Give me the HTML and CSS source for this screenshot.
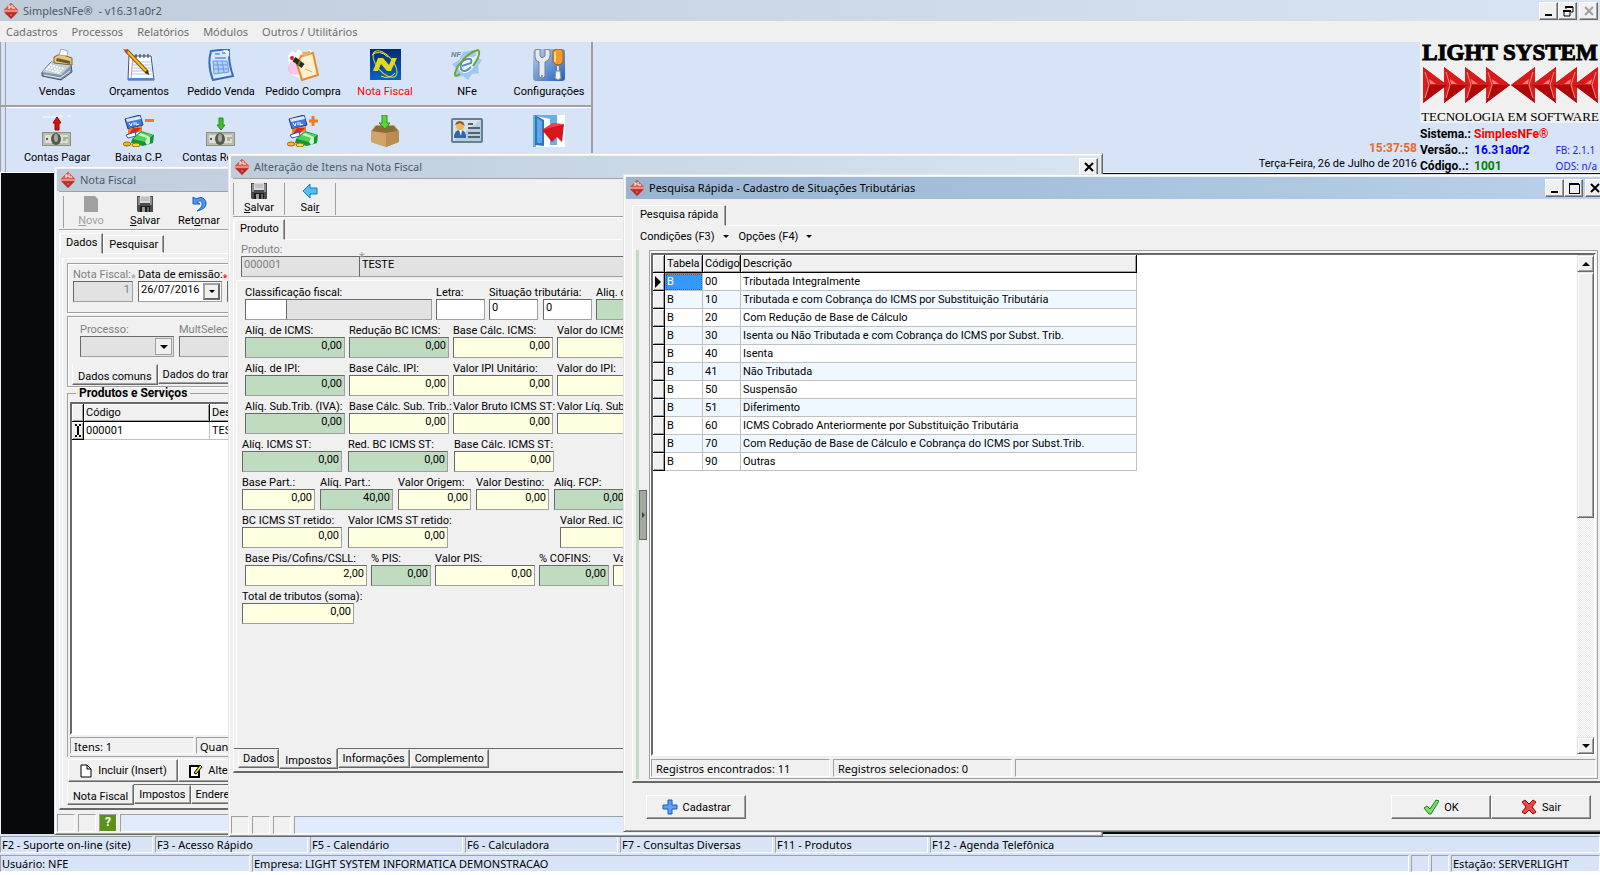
FILE: index.html
```html
<!DOCTYPE html>
<html lang="pt-BR">
<head>
    <meta charset="UTF-8">
    <meta name="viewport" content="width=device-width, initial-scale=1.0">
    <title>SimplesNFe® - v16.31a0r2</title>
    <link rel="stylesheet" href="styles.css">
</head>
<body>
    <!-- Shared icons -->
    <svg class="defs" width="0" height="0">
        <symbol id="brand" viewBox="0 0 16 16">
            <path d="M8 0 L16 8 L8 16 L0 8 Z" fill="#c9372c"/>
            <path d="M3 5 L8 0 L13 5 L15 7 H1 Z" fill="#d9604f"/>
            <path d="M0 8 H16" stroke="#fbe3df" stroke-width="1"/>
            <path d="M5 3 H7 V5 H5 M9 2 V5 H12 M7 12 H9" stroke="#fff" fill="none"/>
            <path d="M2 10 H14 L8 16 Z" fill="#a8251c" opacity=".5"/>
        </symbol>
        <symbol id="floppy" viewBox="0 0 16 16">
            <path d="M0 0 H16 V16 H1 L0 15 Z" fill="#4c4c4c"/>
            <path d="M1 1 H3 V9 H1 Z M13 1 H15 V9 H13 Z" fill="#8d8d8d"/>
            <rect x="3" y="0" width="10" height="7" fill="#d9d9d9"/>
            <path d="M4 2 H12 M4 4 H12" stroke="#aaa"/>
            <rect x="3" y="10" width="10" height="6" fill="#1c1c1c"/>
            <rect x="5" y="11" width="3" height="5" fill="#9a9a9a"/>
            <rect x="10" y="11" width="2" height="5" fill="#666"/>
        </symbol>
        <symbol id="bill" viewBox="0 0 32 32">
            <rect x="1" y="17" width="29" height="14" fill="#8b8f84"/>
            <rect x="2" y="18" width="27" height="12" fill="#b9bdb0"/>
            <rect x="4" y="20" width="23" height="8" fill="#dcdfd4"/>
            <ellipse cx="15" cy="24" rx="5" ry="6" fill="#54594e"/>
            <ellipse cx="15" cy="23" rx="2" ry="4" fill="#a8ac9e"/>
            <circle cx="6" cy="24" r="1" fill="#333"/>
            <path d="M22 23 H27 M22 25 H25" stroke="#777c70"/>
        </symbol>
        <symbol id="cash" viewBox="0 0 32 32">
            <path d="M2 4 L17 0 L20 10 L5 14 Z" fill="#3f7be0" stroke="#223a7c"/>
            <path d="M3 4 L17 1 L18 4 L4 7 Z" fill="#d8e8ff"/>
            <path d="M6 8 L8 11 L9 8 M11 7 V10 M13 7 V10 L16 9" stroke="#fff" fill="none"/>
            <path d="M5 14 L19 11 L19 16 L5 20 Z" fill="#ff7a1f"/>
            <path d="M5 20 L10 13 L18 13 L12 19 Z" fill="#e02a12"/>
            <path d="M3 20 L12 17 L13 21 L5 23 Z" fill="#fff" stroke="#2c5bb0"/>
            <path d="M9 24 L18 16 L31 20 L30 28 L20 31 L8 28 Z" fill="#159238"/>
            <path d="M10 24 L18 17 L30 20 L22 27 Z" fill="#4cd352"/>
            <path d="M15 20 L24 23 L22 27 L24 30 L27 28 L27 22 L18 18 Z" fill="#c9f7c6"/>
            <ellipse cx="4" cy="29" rx="4" ry="2" fill="#f3b618" stroke="#a66b00"/>
            <ellipse cx="13" cy="30" rx="4" ry="2" fill="#f8d44c" stroke="#a66b00"/>
        </symbol>
    </svg>

    <header class="titlebar main-title">
        <svg class="i16"><use href="#brand"/></svg>
        <h1>SimplesNFe® &nbsp;- v16.31a0r2</h1>
        <div class="win-buttons">
            <button aria-label="Minimizar"><svg width="12" height="12"><path d="M2 10 H9" stroke="#000" stroke-width="2"/></svg></button>
            <button aria-label="Restaurar"><svg width="12" height="12"><path d="M4 2 H11 V7 H9 M4 2 V4 M1 6 H8 V11 H2 V6" stroke="#000" fill="none"/><path d="M3 2 H11 M1 6 H9" stroke="#000" stroke-width="2"/></svg></button>
            <button class="close" aria-label="Fechar" disabled><svg width="12" height="12"><path d="M2 2 L10 10 M10 2 L2 10" stroke="#a0a0a0" stroke-width="2"/></svg></button>
        </div>
    </header>
    <nav class="menubar">
        <button>Cadastros</button>
        <button>Processos</button>
        <button>Relatórios</button>
        <button>Módulos</button>
        <button>Outros / Utilitários</button>
    </nav>

    <section class="top">
        <div class="toolbars">
            <div class="toolbar">
                <button>
                    <svg viewBox="0 0 32 32">
                        <path d="M1 23 L10 13 L30 16 L31 23 L20 31 L1 27 Z" fill="#8396aa" stroke="#45566c"/>
                        <path d="M1 23 L10 13 L30 16 L20 26 Z" fill="#c3d0dc"/>
                        <path d="M13 8 L19 5 L31 9 L31 16 L13 14 Z" fill="#e4c878" stroke="#85652a"/>
                        <path d="M16 9 L29 12 V15 L15 12 Z" fill="#6a5a31"/>
                        <path d="M18 6 L20 0 L27 2 L26 7 Z" fill="#fff" stroke="#9aa"/>
                        <path d="M7 18 L21 22 M9 16 L23 20 M5 20 L19 24" stroke="#fff" stroke-width="2" stroke-dasharray="2 1"/>
                        <path d="M3 26 L19 29 L29 22" stroke="#e4ebf2" fill="none"/>
                    </svg>
                    <span>Vendas</span>
                </button>
                <button>
                    <svg viewBox="0 0 32 32">
                        <path d="M6 7 H28 L31 31 H5 Z" fill="#fff" stroke="#3a5688"/>
                        <path d="M5 29 H30 V31 H5 Z" fill="#4788d8"/>
                        <path d="M10 13 H28 M9 16 H28 M9 19 H29 M9 22 H29 M8 25 H29" stroke="#a9c5ec"/>
                        <path d="M10 8 L8 29" stroke="#e09090"/>
                        <path d="M9 5 V9 M13 5 V9 M17 5 V9 M21 5 V9 M25 5 V9" stroke="#333"/>
                        <path d="M3 1 L24 23" stroke="#87590b" stroke-width="4"/>
                        <path d="M3 1 L23 22" stroke="#f9bc28" stroke-width="2"/>
                        <path d="M0 0 L5 1 L4 5 Z" fill="#c43c28"/>
                        <path d="M22 24 L26 26 L25 21 Z" fill="#3a2c1c"/>
                    </svg>
                    <span>Orçamentos</span>
                </button>
                <button>
                    <svg viewBox="0 0 32 32">
                        <path d="M6 2 L24 0 Q23 12 28 27 L8 31 Q2 16 6 2 Z" fill="#d9e8fe" stroke="#356cc5" stroke-width="2"/>
                        <path d="M10 5 H15 M17 4 H22 M10 9 H21" stroke="#7ba5e8" stroke-width="2"/>
                        <path d="M8 12 H22 L24 23 L9 25 Z" fill="#b5d0f8" stroke="#6c97df"/>
                        <path d="M12 12 L14 24 M17 12 L19 23 M8 16 H23 M8 20 H23" stroke="#6c97df"/>
                        <path d="M24 2 L18 1 L24 8 Z" fill="#fff"/>
                    </svg>
                    <span>Pedido Venda</span>
                </button>
                <button>
                    <svg viewBox="0 0 32 32">
                        <path d="M1 7 L5 2 L9 4 L11 0 L15 3 L24 1 L30 16 L20 31 L5 26 L2 18 Z" fill="#fff"/>
                        <circle cx="8" cy="19" r="7" fill="#f5aee8" opacity=".7"/>
                        <path d="M14 7 L26 4 L31 26 L15 31 L10 15 Z" fill="#fdf0cc" stroke="#e9882a" stroke-width="2"/>
                        <path d="M15 3 L23 2 L24 6 L16 8 Z" fill="#e0b070"/>
                        <path d="M7 10 L16 17" stroke="#30261f" stroke-width="5"/>
                        <path d="M11 17 L13 12" stroke="#507748" stroke-width="2"/>
                        <circle cx="5" cy="9" r="2" fill="#e3192a"/>
                        <path d="M18 20 L25 23" stroke="#dcb58a"/>
                    </svg>
                    <span>Pedido Compra</span>
                </button>
                <button class="active">
                    <svg viewBox="0 0 32 32">
                        <linearGradient id="nf" x1="0" y1="0" x2="0" y2="1"><stop offset="0" stop-color="#052a74"/><stop offset="1" stop-color="#0763c4"/></linearGradient>
                        <rect x="1" width="31" height="31" fill="url(#nf)"/>
                        <ellipse cx="16" cy="15" rx="16" ry="8" transform="rotate(50 16 15)" fill="none" stroke="#d9d42d"/>
                        <path d="M4 22 H9 L12 15 L18 22 H22 L28 9 H23 L20 16 L14 9 H9 Z" fill="#e1d81f"/>
                        <path d="M3 6 Q10 0 19 8 M12 27 Q20 31 26 24" stroke="#e8e36c" fill="none"/>
                    </svg>
                    <span>Nota Fiscal</span>
                </button>
                <button>
                    <svg viewBox="0 0 32 32">
                        <path d="M12 3 L24 1 L25 7 L31 11 L27 17 L28 24 L21 25 L17 31 L12 27 L4 28 L5 20 L1 15 L8 11 Z" fill="#9dc9ef"/>
                        <path d="M14 11 L27 6 L22 19 L12 24 Z" fill="#dff0fd"/>
                        <path d="M20 18 Q13 25 10 20 Q8 12 16 10 Q22 9 20 14 L11 17" fill="none" stroke="#fff" stroke-width="4"/>
                        <path d="M20 18 Q13 25 10 20 Q8 12 16 10 Q22 9 20 14 L11 17" fill="none" stroke="#558cb8" stroke-width="2"/>
                        <path d="M9 25 Q0 31 7 17 Q17 3 27 1 Q31 4 22 17" fill="none" stroke="#6aa839" stroke-width="2"/>
                        <text x="0" y="8" class="nf-text">NF</text>
                    </svg>
                    <span>NFe</span>
                </button>
                <button>
                    <svg viewBox="0 0 32 32">
                        <linearGradient id="cf" x1="0" y1="0" x2="1" y2="1"><stop offset="0" stop-color="#b7d2f5"/><stop offset="1" stop-color="#2560b5"/></linearGradient>
                        <rect x="0" y="0" width="32" height="32" rx="3" fill="url(#cf)"/>
                        <path d="M2 1 V8 Q2 12 6 13 V27 Q9 31 12 27 V13 Q17 11 17 7 V1 L12 0 V7 L9 9 L7 7 V0 Z" fill="#e6eaee" stroke="#76818f"/>
                        <circle cx="9" cy="27" r="1" fill="#6c7785"/>
                        <path d="M20 2 Q25 -2 30 2 V13 Q25 19 20 13 Z" fill="#f59a28" stroke="#a85b0e"/>
                        <path d="M22 3 V13" stroke="#ffd391" stroke-width="2"/>
                        <path d="M25 17 V23" stroke="#ddd" stroke-width="2"/>
                        <path d="M23 22 H27 L28 29 L25 31 L22 29 Z" fill="#f0f1f3" stroke="#8d929a"/>
                    </svg>
                    <span>Configurações</span>
                </button>
            </div>
            <div class="toolbar">
                <button>
                    <svg viewBox="0 0 32 32"><path d="M2 2 H16 M18 1 H22 M26 1 H30" stroke="#fff"/><use href="#bill"/><path d="M14 15 V8 H12 L16 2 L20 8 H18 V15 Z" fill="#e00c0c" stroke="#8e0808"/></svg>
                    <span>Contas Pagar</span>
                </button>
                <button>
                    <svg viewBox="0 0 32 32"><use href="#cash"/><rect x="22" y="4" width="9" height="3" fill="#f07a22"/></svg>
                    <span>Baixa C.P.</span>
                </button>
                <button>
                    <svg viewBox="0 0 32 32"><use href="#bill"/><path d="M14 3 V10 H12 L16 15 L20 10 H18 V3 Z" fill="#3cc22f" stroke="#268a1f"/></svg>
                    <span>Contas Receber</span>
                </button>
                <button>
                    <svg viewBox="0 0 32 32"><use href="#cash"/><path d="M22 6 H31 M26 1 V11" stroke="#f07a22" stroke-width="3"/></svg>
                    <span>Baixa C.R.</span>
                </button>
                <button aria-label="Estoque">
                    <svg viewBox="0 0 32 32">
                        <path d="M2 16 L7 10 H25 L30 16 V27 L17 32 L2 27 Z" fill="#c49a62"/>
                        <path d="M7 11 H25 L29 16 L17 18 L3 16 Z" fill="#8f6937"/>
                        <path d="M2 16 L17 19 V32 L2 27 Z" fill="#cfa469"/>
                        <path d="M17 19 L30 16 V27 L17 32 Z" fill="#b88c52"/>
                        <path d="M13 0 H18 V8 H21 L16 14 L10 8 H13 Z" fill="#5cd33c" stroke="#2c9322"/>
                    </svg>
                </button>
                <button aria-label="Contatos">
                    <svg viewBox="0 0 32 32">
                        <rect x="1" y="4" width="30" height="23" rx="1" fill="#d4e2ec" stroke="#66808f" stroke-width="2"/>
                        <path d="M2 26 L30 5 V26 Z" fill="#b6cddd"/>
                        <circle cx="9" cy="11" r="4" fill="#edb35e"/>
                        <path d="M4 10 Q6 4 12 7 L14 11 L9 8 Z" fill="#8c5a19"/>
                        <path d="M3 23 Q3 15 9 15 Q15 15 15 23 Z" fill="#2f65ad"/>
                        <path d="M8 15 H11 L10 21 Z" fill="#fff"/>
                        <path d="M17 9 H22 M17 13 H29 M17 18 H29 M17 22 H29" stroke="#53636e" stroke-width="2"/>
                    </svg>
                </button>
                <button aria-label="Sair do sistema">
                    <svg viewBox="0 0 32 32">
                        <rect width="32" height="32" fill="#fff"/>
                        <path d="M0 0 H24 V30 H17 V4 L3 1 V32 H0 Z" fill="#69aee6"/>
                        <path d="M2 0 L11 5 V31 L2 30 Z" fill="#2a77c0"/>
                        <path d="M4 3 L9 6 V28 L4 28 Z" fill="#5fa8e6"/>
                        <path d="M9 15 L20 8 L21 11 L31 9 L29 27 L24 22 L19 27 Z" fill="#d8141c"/>
                        <path d="M20 8 L9 15 L31 9 Z" fill="#ee4048"/>
                    </svg>
                </button>
            </div>
        </div>

        <div class="clock">
            <strong>15:37:58</strong>
            <span>Terça-Feira, 26 de Julho de 2016</span>
        </div>

        <aside class="about">
            <div class="logo">
                <b>LIGHT SYSTEM</b>
                <svg viewBox="0 0 176 36">
                    <symbol id="tri" viewBox="0 0 24 36">
                        <path d="M0 0 L24 18 L0 36 Z" fill="#c90d10"/>
                        <path d="M0 0 L24 18 L6 18 Z" fill="#d81a1c"/>
                        <path d="M6 18 L24 18 L0 36 Z" fill="#b0090c"/>
                        <path d="M0 0 L6 18 L0 36 Z" fill="#d52022"/>
                        <path d="M2 5 L6 18 L2 31" stroke="#ff8a80" fill="none"/>
                        <path d="M7 17 L13 17 L6 12 Z" fill="#ff8078"/>
                    </symbol>
                    <use href="#tri" x="64" width="24" height="36"/>
                    <use href="#tri" x="43" width="24" height="36"/>
                    <use href="#tri" x="22" width="24" height="36"/>
                    <use href="#tri" x="1" width="24" height="36"/>
                    <g transform="translate(177 0) scale(-1 1)">
                        <use href="#tri" x="64" width="24" height="36"/>
                        <use href="#tri" x="43" width="24" height="36"/>
                        <use href="#tri" x="22" width="24" height="36"/>
                        <use href="#tri" x="1" width="24" height="36"/>
                    </g>
                </svg>
                <span>TECNOLOGIA EM SOFTWARE</span>
            </div>
            <dl>
                <dt>Sistema.:</dt><dd class="red">SimplesNFe®</dd><dd></dd>
                <dt>Versão..:</dt><dd class="blue">16.31a0r2</dd><dd class="small">FB: 2.1.1</dd>
                <dt>Código..:</dt><dd class="green">1001</dd><dd class="small">ODS: n/a</dd>
            </dl>
        </aside>
    </section>

    <main class="desktop"></main>

    <!-- Nota Fiscal -->
    <section class="window win-nota">
        <header class="titlebar">
            <svg class="i16"><use href="#brand"/></svg>
            <h2>Nota Fiscal</h2>
        </header>
        <div class="win-tools">
            <button disabled><svg class="i16" viewBox="0 0 16 16"><path d="M1 0 H12 L15 3 V16 H1 Z" fill="#a0a0a0"/></svg><span><u>N</u>ovo</span></button>
            <button><svg class="i16"><use href="#floppy"/></svg><span><u>S</u>alvar</span></button>
            <button><svg class="i16" viewBox="0 0 16 16"><path d="M2 1 L2 8 H9 L6 6 Q10 3 11 7 Q12 11 6 15 Q16 13 15 6 Q12 -1 5 3 Z" fill="#4b97f2" stroke="#1d5dc0"/></svg><span>Ret<u>o</u>rnar</span></button>
        </div>
        <div class="win-body">
            <div class="tabs">
                <button class="selected">Dados</button>
                <button>Pesquisar</button>
            </div>
            <div class="page">
                <div class="group row">
                    <div class="field w60 muted"><label for="nf-num">Nota Fiscal:<i class="req">*</i></label><input id="nf-num" class="gray num" value="1" disabled></div>
                    <div class="field w84">
                        <label for="nf-data">Data de emissão:<i class="req red">*</i></label>
                        <div class="combo"><input id="nf-data" value="26/07/2016"><button aria-label="Abrir calendário"></button></div>
                    </div>
                    <div class="field w84"><label for="nf-hora">&nbsp;</label><input id="nf-hora" class="gray"></div>
                </div>
                <div class="group process">
                    <div class="row muted">
                        <div class="field w94"><label for="proc">Processo:</label><div class="combo wide"><select id="proc" disabled><option></option></select><span class="arrow"></span></div></div>
                        <div class="field w94"><label for="mult">MultSelec:</label><input id="mult" class="gray" disabled></div>
                    </div>
                    <div class="tabs bottom">
                        <button class="selected">Dados comuns</button>
                        <button>Dados do transporte</button>
                    </div>
                </div>
                <fieldset>
                    <legend>Produtos e Serviços</legend>
                    <div class="grid-box">
                        <table class="grid items">
                            <thead><tr><th class="ind"></th><th class="cod">Código</th><th class="desc">Descrição</th></tr></thead>
                            <tbody><tr><td class="ind"><svg width="8" height="13"><path d="M1 1 H3 M5 1 H7 M1 12 H3 M5 12 H7 M4 2 V11" stroke="#000" stroke-width="2"/></svg></td><td>000001</td><td>TESTE</td></tr></tbody>
                        </table>
                    </div>
                    <div class="status"><span class="w124">Itens: 1</span><span>Quantidade: 1</span></div>
                </fieldset>
                <div class="actions">
                    <button><svg width="14" height="14"><path d="M2 1 H8 L12 5 V13 H2 Z M8 1 V5 H12" fill="#fff" stroke="#000"/></svg>Incluir (Insert)</button>
                    <button><svg width="14" height="14"><path d="M1 2 H10 V13 H1 Z" fill="#fff" stroke="#000" stroke-width="2"/><path d="M5 9 L11 1 L13 3 L7 10 Z" fill="#f0e224" stroke="#000"/></svg>Alterar (Enter)</button>
                </div>
                <div class="tabs bottom">
                    <button class="selected">Nota Fiscal</button>
                    <button>Impostos</button>
                    <button>Endereços</button>
                </div>
            </div>
        </div>
        <footer class="statusbar"><span></span><span></span><span class="help">?</span><span class="fill"></span></footer>
    </section>

    <!-- Alteração de Itens -->
    <section class="window win-itens">
        <header class="titlebar">
            <svg class="i16"><use href="#brand"/></svg>
            <h2>Alteração de Itens na Nota Fiscal</h2>
            <div class="win-buttons">
                <button class="close" aria-label="Fechar"><svg width="12" height="12"><path d="M2 2 L10 10 M10 2 L2 10" stroke="#000" stroke-width="2"/></svg></button>
            </div>
        </header>
        <div class="win-tools ruled">
            <button><svg class="i16"><use href="#floppy"/></svg><span><u>S</u>alvar</span></button>
            <button><svg class="i16" viewBox="0 0 16 16"><path d="M1 8 L8 1 V5 H15 V11 H8 V15 Z" fill="#55bdf5" stroke="#1878c4"/></svg><span>Sai<u>r</u></span></button>
        </div>
        <div class="win-body">
            <div class="tabs"><button class="selected">Produto</button></div>
            <div class="product">
                <div class="field muted"><label for="prod">Produto:</label>
                    <div class="joined"><input id="prod" class="gray w118" value="000001" disabled><input class="gray name" aria-label="Descrição do produto" value="TESTE"></div>
                </div>
                <i class="star">*</i>
            </div>
            <form class="taxes">
                <div class="row in">
                    <div class="field"><label for="clf">Classificação fiscal:</label><div class="joined"><input id="clf" class="w42"><input class="gray w145" aria-label="Descrição da classificação"></div></div>
                    <div class="field w49"><label for="letra">Letra:</label><input id="letra"></div>
                    <div class="field"><label for="sit">Situação tributária:</label><div class="pair"><input id="sit" class="w49" value="0"><input class="w49" aria-label="Situação tributária, código" value="0"></div></div>
                    <div class="field w100"><label for="alq">Aliq. crédito:</label><input id="alq" class="green-bg num"></div>
                </div>
                <div class="row in">
                    <div class="field w100"><label for="a1">Alíq. de ICMS:</label><input id="a1" class="green-bg num" value="0,00"></div>
                    <div class="field w100"><label for="a2">Redução BC ICMS:</label><input id="a2" class="green-bg num" value="0,00"></div>
                    <div class="field w100"><label for="a3">Base Cálc. ICMS:</label><input id="a3" class="cream num" value="0,00"></div>
                    <div class="field w100"><label for="a4">Valor do ICMS:</label><input id="a4" class="cream num" value="0,00"></div>
                </div>
                <div class="row in">
                    <div class="field w100"><label for="b1">Alíq. de IPI:</label><input id="b1" class="green-bg num" value="0,00"></div>
                    <div class="field w100"><label for="b2">Base Cálc. IPI:</label><input id="b2" class="cream num" value="0,00"></div>
                    <div class="field w100"><label for="b3">Valor IPI Unitário:</label><input id="b3" class="cream num" value="0,00"></div>
                    <div class="field w100"><label for="b4">Valor do IPI:</label><input id="b4" class="cream num" value="0,00"></div>
                </div>
                <div class="row in">
                    <div class="field w100"><label for="c1">Alíq. Sub.Trib. (IVA):</label><input id="c1" class="green-bg num" value="0,00"></div>
                    <div class="field w100"><label for="c2">Base Cálc. Sub. Trib.:</label><input id="c2" class="cream num" value="0,00"></div>
                    <div class="field w100"><label for="c3">Valor Bruto ICMS ST:</label><input id="c3" class="cream num" value="0,00"></div>
                    <div class="field w100"><label for="c4">Valor Líq. Sub. Trib.:</label><input id="c4" class="cream num" value="0,00"></div>
                </div>
                <div class="row wide-gap">
                    <div class="field w100"><label for="d1">Alíq. ICMS ST:</label><input id="d1" class="green-bg num" value="0,00"></div>
                    <div class="field w100"><label for="d2">Red. BC ICMS ST:</label><input id="d2" class="green-bg num" value="0,00"></div>
                    <div class="field w100"><label for="d3">Base Cálc. ICMS ST:</label><input id="d3" class="cream num" value="0,00"></div>
                </div>
                <div class="row">
                    <div class="field w73"><label for="e1">Base Part.:</label><input id="e1" class="cream num" value="0,00"></div>
                    <div class="field w73"><label for="e2">Alíq. Part.:</label><input id="e2" class="green-bg num" value="40,00"></div>
                    <div class="field w73"><label for="e3">Valor Origem:</label><input id="e3" class="cream num" value="0,00"></div>
                    <div class="field w73"><label for="e4">Valor Destino:</label><input id="e4" class="cream num" value="0,00"></div>
                    <div class="field w73"><label for="e5">Alíq. FCP:</label><input id="e5" class="green-bg num" value="0,00"></div>
                </div>
                <div class="row wide-gap">
                    <div class="field w100"><label for="f1">BC ICMS ST retido:</label><input id="f1" class="cream num" value="0,00"></div>
                    <div class="field w100"><label for="f2">Valor ICMS ST retido:</label><input id="f2" class="cream num" value="0,00"></div>
                    <div class="w100"></div>
                    <div class="field w100"><label for="f3">Valor Red. ICMS:</label><input id="f3" class="cream num" value="0,00"></div>
                </div>
                <div class="row in">
                    <div class="field w122"><label for="g1">Base Pis/Cofins/CSLL:</label><input id="g1" class="cream num" value="2,00"></div>
                    <div class="field w60"><label for="g2">% PIS:</label><input id="g2" class="green-bg num" value="0,00"></div>
                    <div class="field w100"><label for="g3">Valor PIS:</label><input id="g3" class="cream num" value="0,00"></div>
                    <div class="field w70"><label for="g4">% COFINS:</label><input id="g4" class="green-bg num" value="0,00"></div>
                    <div class="field w100"><label for="g5">Valor COFINS:</label><input id="g5" class="cream num" value="0,00"></div>
                </div>
                <div class="row">
                    <div class="field w112"><label for="h1">Total de tributos (soma):</label><input id="h1" class="cream num" value="0,00"></div>
                </div>
            </form>
            <div class="tabs bottom">
                <button>Dados</button>
                <button class="selected">Impostos</button>
                <button>Informações</button>
                <button>Complemento</button>
            </div>
        </div>
        <footer class="statusbar"><span></span><span></span><span></span><span class="fill"></span></footer>
    </section>

    <!-- Pesquisa Rápida -->
    <section class="window win-pesquisa">
        <header class="titlebar current">
            <svg class="i16"><use href="#brand"/></svg>
            <h2>Pesquisa Rápida - Cadastro de Situações Tributárias</h2>
            <div class="win-buttons">
                <button aria-label="Minimizar"><svg width="12" height="12"><path d="M2 10 H9" stroke="#000" stroke-width="2"/></svg></button>
                <button aria-label="Maximizar"><svg width="12" height="12" shape-rendering="crispEdges"><path d="M1 1 H11 M1 2 H11 V11 H1 Z" stroke="#000" fill="none"/></svg></button>
                <button class="close" aria-label="Fechar"><svg width="12" height="12"><path d="M2 2 L10 10 M10 2 L2 10" stroke="#000" stroke-width="2"/></svg></button>
            </div>
        </header>
        <div class="search">
            <div class="tabs"><button class="selected">Pesquisa rápida</button></div>
            <div class="search-page">
                <div class="filters">
                    <button>Condições (F3)<span class="caret"></span></button>
                    <button>Opções (F4)<span class="caret"></span></button>
                </div>
                <div class="search-main">
                    <div class="splitter"><button aria-label="Recolher painel"></button></div>
                    <div class="results">
                        <div class="grid-box">
                            <table class="grid">
                                <thead><tr><th class="ind"></th><th class="c38">Tabela</th><th class="c38">Código</th><th class="c395">Descrição</th></tr></thead>
                                <tbody>
                                    <tr><td class="ind"><svg width="6" height="12"><path d="M0 0 L6 6 L0 12 Z"/></svg></td><td class="sel">B</td><td>00</td><td>Tributada Integralmente</td></tr>
                                    <tr><td class="ind"></td><td>B</td><td>10</td><td>Tributada e com Cobrança do ICMS por Substituição Tributária</td></tr>
                                    <tr><td class="ind"></td><td>B</td><td>20</td><td>Com Redução de Base de Cálculo</td></tr>
                                    <tr><td class="ind"></td><td>B</td><td>30</td><td>Isenta ou Não Tributada e com Cobrança do ICMS por Subst. Trib.</td></tr>
                                    <tr><td class="ind"></td><td>B</td><td>40</td><td>Isenta</td></tr>
                                    <tr><td class="ind"></td><td>B</td><td>41</td><td>Não Tributada</td></tr>
                                    <tr><td class="ind"></td><td>B</td><td>50</td><td>Suspensão</td></tr>
                                    <tr><td class="ind"></td><td>B</td><td>51</td><td>Diferimento</td></tr>
                                    <tr><td class="ind"></td><td>B</td><td>60</td><td>ICMS Cobrado Anteriormente por Substituição Tributária</td></tr>
                                    <tr><td class="ind"></td><td>B</td><td>70</td><td>Com Redução de Base de Cálculo e Cobrança do ICMS por Subst.Trib.</td></tr>
                                    <tr><td class="ind"></td><td>B</td><td>90</td><td>Outras</td></tr>
                                </tbody>
                            </table>
                            <div class="scrollbar">
                                <button class="up" aria-label="Rolar para cima"></button>
                                <div class="track"><div class="thumb"></div></div>
                                <button class="down" aria-label="Rolar para baixo"></button>
                            </div>
                        </div>
                        <div class="status"><span class="w180">Registros encontrados: 11</span><span class="w180">Registros selecionados: 0</span><span></span></div>
                    </div>
                </div>
            </div>
        </div>
        <footer class="dialog-buttons">
            <button><svg width="16" height="16"><path d="M6 1 H10 V6 H15 V10 H10 V15 H6 V10 H1 V6 H6 Z" fill="#5aa2f2" stroke="#1e56b8"/></svg>Cadastrar</button>
            <div>
                <button><svg width="16" height="16"><path d="M1 9 L4 7 L7 10 L13 1 L16 2 L8 15 L6 15 Z" fill="#7fd96c" stroke="#168a1a"/></svg>OK</button>
                <button><svg width="16" height="16"><path d="M1 3 L4 1 L8 5 L12 1 L15 3 L11 8 L15 13 L12 15 L8 11 L4 15 L1 13 L5 8 Z" fill="#f0474a" stroke="#99070c"/></svg>Sair</button>
            </div>
        </footer>
    </section>

    <footer class="keys">
        <span>F2 - Suporte on-line (site)</span>
        <span>F3 - Acesso Rápido</span>
        <span>F5 - Calendário</span>
        <span>F6 - Calculadora</span>
        <span>F7 - Consultas Diversas</span>
        <span>F11 - Produtos</span>
        <span class="last">F12 - Agenda Telefônica</span>
    </footer>
    <footer class="keys session">
        <span class="user">Usuário: NFE</span>
        <span class="last">Empresa: LIGHT SYSTEM INFORMATICA DEMONSTRACAO</span>
        <span class="tiny"></span>
        <span class="tiny"></span>
        <span class="station">Estação: SERVERLIGHT</span>
    </footer>
</body>
</html>
```
FILE: styles.css
```css
:root {
    --face: #f0f0f0;
    --light: #e3e3e3;
    --shadow: #a0a0a0;
    --dark: #696969;
    --blue: #d7e4f8;
    --green: #c0dcc0;
    --cream: #ffffe1;
    --sans: Roboto, "Liberation Sans", Arial, sans-serif;
    --ui: "Noto Sans", "Open Sans", sans-serif;
}

* {
    box-sizing: border-box;
}

body {
    margin: 0;
    min-height: 100vh;
    display: flex;
    flex-direction: column;
    position: relative;
    overflow: hidden;
    font: 11px/13px var(--sans);
    color: #000;
    background-color: var(--face);
}

button, input, select {
    font: inherit;
    color: inherit;
    margin: 0;
    padding: 0;
    border-radius: 0;
}

button {
    background: none;
    border: none;
    white-space: nowrap;
}

svg {
    display: block;
    flex: none;
}

.defs {
    position: absolute;
}

.i16 {
    width: 16px;
    height: 16px;
}

/* Title bars */
.titlebar {
    display: flex;
    align-items: center;
    gap: 4px;
    height: 22px;
    flex: none;
    padding: 0 2px 0 3px;
    color: #4b5866;
    background: linear-gradient(90deg, #bfcddb, #d7e4f2);
}

.titlebar.main-title {
    height: 21px;
}

.titlebar.current {
    color: #000;
    background: linear-gradient(90deg, #99b4d1, #b9d1ea);
}

.titlebar h1, .titlebar h2 {
    margin: 0;
    font: 11px/18px var(--ui);
}

.win-buttons {
    display: flex;
    margin-left: auto;
}

.win-buttons button {
    width: 19px;
    height: 18px;
    display: flex;
    align-items: center;
    justify-content: center;
    background-color: var(--face);
    border: 1px solid;
    border-color: #fff var(--dark) var(--dark) #fff;
    box-shadow: inset -1px -1px var(--shadow);
}

.win-buttons .close {
    margin-left: 2px;
}

.menubar {
    display: flex;
    gap: 14px;
    height: 21px;
    padding: 0 6px;
    font: 11px/20px var(--ui);
    color: #6d6d6d;
}

/* Toolbars and logo */
.top {
    display: flex;
    height: 131px;
    background-color: var(--blue);
    border-bottom: 1px solid #fff;
}

.toolbars {
    border-left: 1px solid var(--shadow);
    border-right: 2px solid var(--shadow);
    height: 130px;
}

.toolbar {
    display: flex;
    height: 65px;
    padding: 7px 1px 0 15px;
    border-bottom: 2px solid var(--shadow);
    box-shadow: 0 1px #fff, inset 4px 0 var(--blue), inset 5px 0 var(--shadow);
}

.toolbar + .toolbar {
    padding-top: 8px;
    border-bottom: none;
}

.toolbar button {
    width: 82px;
    display: flex;
    flex-direction: column;
    align-items: center;
    gap: 4px;
}

.toolbar svg {
    width: 32px;
    height: 32px;
}

.toolbar .active {
    color: #f00;
}

.nf-text {
    font: italic bold 8px var(--sans);
    fill: #6d8494;
}

.clock {
    margin-left: auto;
    display: flex;
    flex-direction: column;
    justify-content: flex-end;
    align-items: flex-end;
    gap: 2px;
    padding: 0 3px 2px 0;
}

.clock strong {
    font-size: 12px;
    color: #e8691b;
}

.about {
    width: 180px;
}

.logo {
    height: 81px;
    background-color: var(--face);
    display: flex;
    flex-direction: column;
    align-items: center;
    font-family: "Liberation Serif", serif;
    white-space: nowrap;
}

.logo b {
    font-size: 23px;
    line-height: 22px;
    -webkit-text-stroke: 1px #000;
}

.logo svg {
    width: 176px;
    height: 36px;
    margin-top: 3px;
}

.logo span {
    margin-top: 4px;
    font-size: 13px;
    line-height: 20px;
}

.about dl {
    display: grid;
    grid-template-columns: 54px 1fr auto;
    margin: 3px 3px 0 0;
    font: bold 12px/16px var(--sans);
    white-space: nowrap;
}

.about dd {
    margin: 0;
}

.about .small {
    font: 10px/16px var(--ui);
    color: #22d;
}

.red { color: #f00; }
.blue { color: #00f; }
.green { color: #008000; }

.desktop {
    flex: 1;
    margin-left: 1px;
    background-color: #08090b;
}

/* Windows */
.window {
    position: absolute;
    display: flex;
    flex-direction: column;
    background-color: var(--face);
    border: 1px solid;
    border-color: var(--light) var(--dark) var(--dark) var(--light);
    box-shadow: inset 1px 1px #fff, inset -1px -1px var(--shadow);
    padding: 2px;
}

.win-nota {
    left: 54px;
    top: 166px;
    right: 40%;
    bottom: 40px;
}

.win-itens {
    left: 228px;
    top: 153px;
    right: 497px;
    bottom: 38px;
}

.win-pesquisa {
    left: 623px;
    top: 174px;
    right: -9px;
    bottom: 43px;
}

.win-tools {
    display: flex;
    flex: none;
    height: 39px;
    margin-left: 2px;
    padding: 5px 0 0 5px;
    border-bottom: 1px solid var(--shadow);
    box-shadow: 0 1px #fff, inset 0 1px var(--shadow);
}

.win-tools button {
    width: 54px;
    height: 32px;
    display: flex;
    flex-direction: column;
    align-items: center;
    gap: 2px;
}

.win-tools.ruled {
    padding-left: 1px;
}

.win-tools.ruled button {
    width: 51px;
    border-right: 1px solid var(--shadow);
}

.win-tools button:first-child {
    box-shadow: -1px 0 var(--shadow);
}

.win-tools button:disabled {
    color: var(--shadow);
}

.win-body {
    flex: 1;
    display: flex;
    flex-direction: column;
    margin: 3px 2px 4px 2px;
    border-bottom: 2px solid var(--dark);
    border-left: 1px solid #fff;
    min-height: 0;
}

.tabs {
    display: flex;
    align-items: flex-end;
    flex: none;
    height: 21px;
    border-bottom: 1px solid #fff;
}

.tabs button {
    height: 18px;
    padding: 0 5px;
    border: 1px solid;
    border-color: #fff var(--dark) transparent #fff;
    box-shadow: inset -1px 0 var(--shadow);
}

.tabs .selected {
    height: 21px;
    padding-bottom: 2px;
    margin-bottom: -1px;
    background-color: var(--face);
    border-bottom: 1px solid var(--face);
}

.tabs.bottom {
    align-items: flex-start;
    border-bottom: none;
    border-top: 1px solid var(--dark);
}

.tabs.bottom button {
    height: 19px;
    padding: 0 4px;
    border-color: transparent var(--dark) var(--dark) #fff;
    box-shadow: inset -1px -1px var(--shadow);
}

.tabs.bottom .selected {
    height: 21px;
    margin-top: -1px;
    padding: 3px 5px 0;
    border-top-color: var(--face);
}

.page {
    flex: 1;
    display: flex;
    flex-direction: column;
    min-height: 0;
    margin: 4px 0 3px 2px;
    padding: 4px 0 0 4px;
    border-left: 1px solid #fff;
    border-top: 1px solid #fff;
}

.group {
    border: 1px solid var(--shadow);
    box-shadow: inset 1px 1px #fff, 0 1px #fff;
    flex: none;
}

.group.row {
    height: 50px;
    padding: 4px 5px;
    margin-bottom: 3px;
}

.process {
    height: 71px;
    padding: 6px 0 0 4px;
}

.process .row {
    padding-left: 8px;
    height: 41px;
}

.process .tabs {
    border-top-color: var(--face);
}

/* Fields */
.row {
    display: flex;
    gap: 5px;
    height: 38px;
}

.row.in { padding-left: 3px; gap: 4px; }
.row.wide-gap { gap: 6px; }

.field {
    flex: none;
}

.field label {
    display: block;
    height: 13px;
    white-space: nowrap;
}

.muted label, .muted input:disabled {
    color: #808080;
}

.field input, .combo {
    display: block;
    width: 100%;
    height: 21px;
    padding: 0 2px 4px;
    border: 1px solid;
    border-color: var(--dark) var(--shadow) var(--shadow) var(--dark);
    background-color: #fff;
    outline: none;
}

.field input.num { text-align: right; }
.field input.gray { background-color: #e2e2e2; }
.field input.green-bg { background-color: var(--green); }
.field input.cream { background-color: var(--cream); }

.req {
    font-style: normal;
    color: var(--shadow);
    position: relative;
    top: 4px;
}

.req.red { color: #f00; }

.joined, .pair {
    display: flex;
}

.pair { gap: 5px; }

.joined input + input {
    border-left-color: var(--dark);
    margin-left: -1px;
}

.field .w42 { width: 42px; }
.field .w118 { width: 119px; }
.field .w145 { width: 146px; }
.field .name { width: 480px; }
.field.w49, .field .w49 { width: 49px; }
.w60 { width: 60px; }
.w70 { width: 70px; }
.w73 { width: 73px; }
.w84 { width: 84px; }
.w94 { width: 94px; }
.w100 { width: 100px; }
.w112 { width: 112px; }
.w122 { width: 122px; }

.field .combo {
    display: flex;
    padding: 0;
}

.field .combo input, .combo select {
    flex: 1;
    width: 0;
    height: 19px;
    border: none;
    appearance: none;
    background-color: transparent;
}

.field .combo.wide {
    background-color: #e2e2e2;
}

.combo button, .combo .arrow {
    flex: none;
    width: 17px;
    margin: 1px;
    background-color: var(--face);
    border: 1px solid var(--shadow);
    display: flex;
    align-items: center;
    justify-content: center;
}

.combo button {
    border: 2px solid;
    border-color: var(--shadow) var(--dark) var(--dark) var(--shadow);
}

.combo button::after, .combo .arrow::after, .caret, .scrollbar button::after {
    content: "";
    border: 3px solid transparent;
    border-top-color: #000;
    border-bottom: none;
}

.combo .arrow::after {
    border-width: 4px 4px 0;
}

.product {
    position: relative;
    padding: 3px 0 0 7px;
    height: 39px;
}

.star {
    position: absolute;
    left: 125px;
    top: 10px;
    font-style: normal;
    font-size: 13px;
    color: var(--shadow);
}

.taxes {
    flex: 1;
    margin: 1px 0 0 2px;
    padding: 5px 0 0 5px;
    border-left: 1px solid #fff;
    border-top: 1px solid #fff;
    min-height: 0;
}

.win-itens .win-body {
    margin-top: 2px;
    margin-bottom: 43px;
}

.win-itens .tabs.bottom {
    margin-bottom: 2px;
    padding-left: 4px;
}

/* Grids */
fieldset {
    flex: 1;
    display: flex;
    flex-direction: column;
    min-width: 0;
    min-height: 0;
    margin: 0;
    padding: 2px 0 0 2px;
    border: 1px solid var(--shadow);
    border-bottom: none;
}

legend {
    margin-left: 6px;
    padding: 0 3px;
    font: bold 12px/13px var(--sans);
}

.grid-box {
    flex: 1;
    display: flex;
    min-height: 0;
    background-color: #fff;
    border: 2px solid;
    border-color: var(--dark) #fff #fff var(--dark);
}

.grid {
    border-collapse: separate;
    border-spacing: 0;
    table-layout: fixed;
    width: 484px;
    height: max-content;
}

.grid th, .grid td {
    height: 18px;
    padding: 0 2px;
    text-align: left;
    font-weight: normal;
    line-height: 14px;
    white-space: nowrap;
    border-right: 1px solid #c0c0c0;
    border-bottom: 1px solid #c0c0c0;
}

.grid th {
    background-color: var(--face);
    border-color: #000;
    box-shadow: inset 1px 1px #fff, inset -1px -1px var(--shadow);
}

.grid .ind {
    width: 12px;
    padding: 0 0 0 2px;
    background-color: var(--face);
    border-color: #000;
    box-shadow: inset 1px 1px #fff, inset -1px -1px var(--shadow);
}

.grid tbody tr:nth-child(even) td:not(.ind) {
    background-color: #f0f8ff;
}

.c38 { width: 38px; }
.cod { width: 126px; }

.grid .sel {
    background-color: #3399ff;
    color: #fff;
    outline: 1px dotted #a04808;
    outline-offset: -2px;
}

.status {
    display: flex;
    gap: 2px;
    flex: none;
    height: 22px;
    padding: 2px 0;
    font: 11px/17px var(--ui);
    border-bottom: 1px solid var(--shadow);
}

.status span {
    flex: 1;
    padding-left: 3px;
    border: 1px solid;
    border-color: var(--shadow) #fff #fff var(--shadow);
    white-space: nowrap;
}

.status .w124 { flex: none; width: 124px; }
.status .w180 { flex: none; width: 179px; }

.actions {
    display: flex;
    flex: none;
    padding: 2px 0 2px 1px;
}

.actions button, .dialog-buttons button {
    display: flex;
    align-items: center;
    justify-content: center;
    gap: 5px;
    width: 110px;
    height: 23px;
    border: 1px solid;
    border-color: #fff var(--dark) var(--dark) #fff;
    box-shadow: inset -1px -1px var(--shadow);
}

.statusbar {
    display: flex;
    gap: 3px;
    flex: none;
    height: 18px;
}

.statusbar span {
    width: 18px;
    border: 1px solid;
    border-color: var(--shadow) #fff #fff var(--shadow);
}

.statusbar .fill {
    flex: 1;
    background-color: #e0ecfb;
}

.statusbar .help {
    background-color: #5a9216;
    color: #fff;
    font: bold 12px/15px var(--sans);
    text-align: center;
}

/* Search window */
.search {
    flex: 1;
    display: flex;
    flex-direction: column;
    min-height: 0;
    padding: 6px 0 0 6px;
}

.search-page {
    flex: 1;
    display: flex;
    flex-direction: column;
    min-height: 0;
    padding-right: 8px;
    border-left: 1px solid #fff;
    border-bottom: 2px solid var(--dark);
}

.search .tabs button {
    padding: 0 7px 2px;
}

.filters {
    display: flex;
    gap: 10px;
    height: 24px;
    padding: 0 7px 3px;
}

.filters button {
    display: flex;
    align-items: center;
    gap: 8px;
}

.search-main {
    flex: 1;
    display: flex;
    min-height: 0;
    padding: 0 0 2px 3px;
}

.splitter {
    width: 13px;
    display: flex;
    align-items: center;
    border-left: 3px solid var(--green);
}

.splitter button {
    width: 8px;
    height: 50px;
    display: flex;
    align-items: center;
    justify-content: center;
    background-color: #a3a99f;
    border: 1px solid var(--dark);
}

.splitter button::after {
    content: "";
    border: 3px solid transparent;
    border-left-color: #444;
    border-right: none;
}

.results {
    flex: 1;
    display: flex;
    flex-direction: column;
    min-width: 0;
    border: 1px solid var(--shadow);
    box-shadow: inset 1px 1px #fff;
    padding: 2px 1px 0;
}

.results .status {
    border-bottom: none;
    padding: 3px 0 1px;
    gap: 3px;
}

.results .status span {
    padding-left: 4px;
}

.scrollbar {
    width: 17px;
    margin-left: auto;
    display: flex;
    flex-direction: column;
}

.scrollbar button, .thumb {
    height: 17px;
    background-color: var(--face);
    border: 1px solid;
    border-color: var(--light) var(--dark) var(--dark) var(--light);
    box-shadow: inset 1px 1px #fff, inset -1px -1px var(--shadow);
    display: flex;
    align-items: center;
    justify-content: center;
}

.scrollbar button::after {
    border-width: 4px 4px 0;
}

.scrollbar .up::after {
    border: 4px solid transparent;
    border-bottom-color: #000;
    border-top: none;
}

.track {
    flex: 1;
    background: repeating-conic-gradient(#fff 0 25%, #e8e8e8 0 50%) 0 0 / 2px 2px;
}

.track .thumb {
    height: 53%;
}

.dialog-buttons {
    display: flex;
    flex: none;
    justify-content: space-between;
    padding: 12px 15px 10px 20px;
}

.dialog-buttons div {
    display: flex;
}

.dialog-buttons button {
    width: 100px;
    height: 24px;
}

/* Bottom bars */
.keys {
    display: flex;
    gap: 2px;
    height: 19px;
    flex: none;
    padding-top: 2px;
    background-color: var(--blue);
    font: 11px/15px var(--ui);
}

.keys span {
    width: 153px;
    padding-left: 1px;
    border: 1px solid;
    border-color: var(--shadow) #fff #fff var(--shadow);
    white-space: nowrap;
}

.keys .last { flex: 1; }
.keys .user { width: 250px; }
.keys .tiny { width: 18px; }
.keys .station { width: 149px; }

.session {
    height: 22px;
    border-bottom: 3px solid #fff;
}
```
